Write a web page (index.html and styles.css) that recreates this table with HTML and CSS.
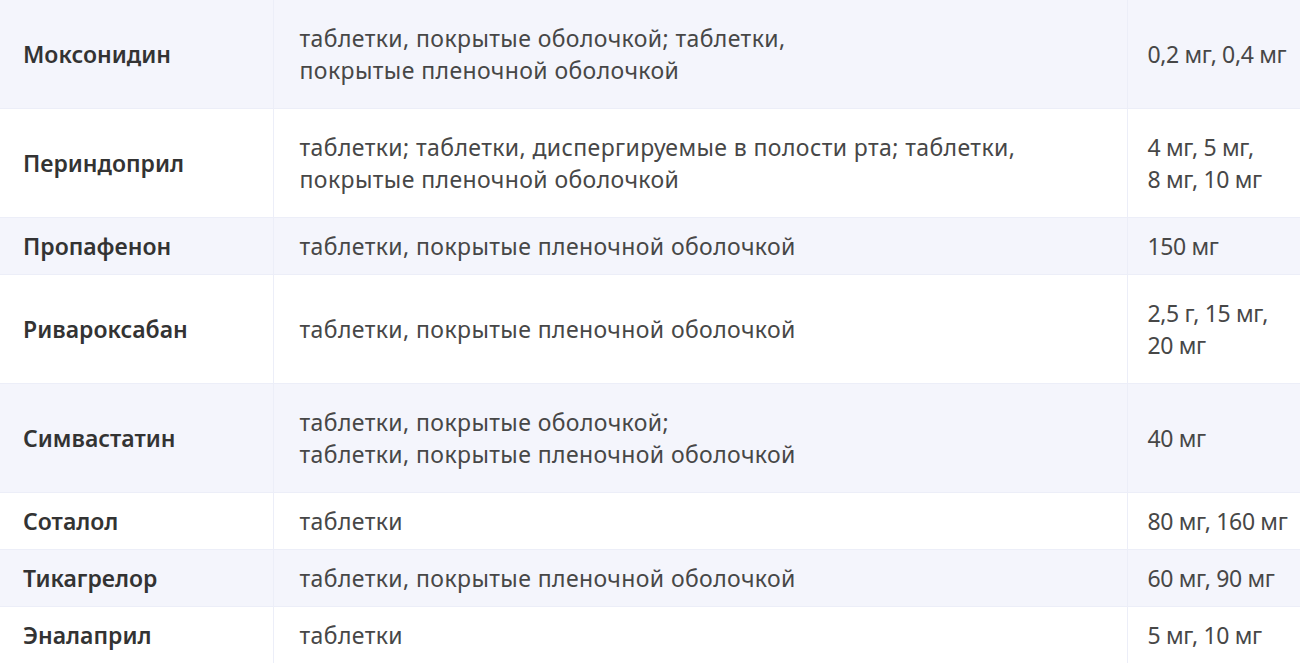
FILE: index.html
```html
<!DOCTYPE html>
<html lang="ru">
<head>
<meta charset="utf-8">
<title>Препараты</title>
<link rel="stylesheet" href="styles.css">
</head>
<body>
<table class="drugs">
  <colgroup>
    <col class="c-name">
    <col class="c-form">
    <col class="c-dose">
  </colgroup>
  <tbody>
    <tr class="alt tall">
      <td class="name">Моксонидин</td>
      <td class="form">таблетки, покрытые оболочкой; таблетки,<br>покрытые пленочной оболочкой</td>
      <td class="dose">0,2 мг, 0,4 мг</td>
    </tr>
    <tr class="tall">
      <td class="name">Периндоприл</td>
      <td class="form">таблетки; таблетки, диспергируемые в полости рта; таблетки,<br>покрытые пленочной оболочкой</td>
      <td class="dose">4 мг, 5 мг,<br>8 мг, 10 мг</td>
    </tr>
    <tr class="alt">
      <td class="name">Пропафенон</td>
      <td class="form">таблетки, покрытые пленочной оболочкой</td>
      <td class="dose">150 мг</td>
    </tr>
    <tr class="tall">
      <td class="name">Ривароксабан</td>
      <td class="form">таблетки, покрытые пленочной оболочкой</td>
      <td class="dose">2,5 г, 15 мг,<br>20 мг</td>
    </tr>
    <tr class="alt tall">
      <td class="name">Симвастатин</td>
      <td class="form">таблетки, покрытые оболочкой;<br>таблетки, покрытые пленочной оболочкой</td>
      <td class="dose">40 мг</td>
    </tr>
    <tr>
      <td class="name">Соталол</td>
      <td class="form">таблетки</td>
      <td class="dose">80 мг, 160 мг</td>
    </tr>
    <tr class="alt">
      <td class="name">Тикагрелор</td>
      <td class="form">таблетки, покрытые пленочной оболочкой</td>
      <td class="dose">60 мг, 90 мг</td>
    </tr>
    <tr>
      <td class="name">Эналаприл</td>
      <td class="form">таблетки</td>
      <td class="dose">5 мг, 10 мг</td>
    </tr>
  </tbody>
</table>
</body>
</html>
```

FILE: styles.css
```css
html, body {
  margin: 0;
  padding: 0;
  background: #ffffff;
}

.drugs {
  width: 1300px;
  border-collapse: collapse;
  table-layout: fixed;
  font-family: "Noto Sans", "Open Sans", sans-serif;
  font-size: 23px;
  line-height: 32px;
  color: #474747;
}

.c-name { width: 273px; }
.c-form { width: 854px; }
.c-dose { width: 173px; }

.drugs td {
  padding: 12px 20px 12px 26px;
  vertical-align: middle;
  border-bottom: 1px solid #eceef8;
  border-right: 1px solid #eceef8;
}

.drugs tr.tall td {
  padding-top: 22px;
  padding-bottom: 22px;
}

.drugs tr.alt td {
  background: #f4f5fc;
}

.drugs td.name {
  padding-left: 23px;
  font-weight: 600;
  color: #333333;
}

.drugs td.form {
  letter-spacing: 0.4px;
}

.drugs td.dose {
  padding-left: 20px;
  padding-right: 2px;
  letter-spacing: -0.35px;
  white-space: nowrap;
}
```
